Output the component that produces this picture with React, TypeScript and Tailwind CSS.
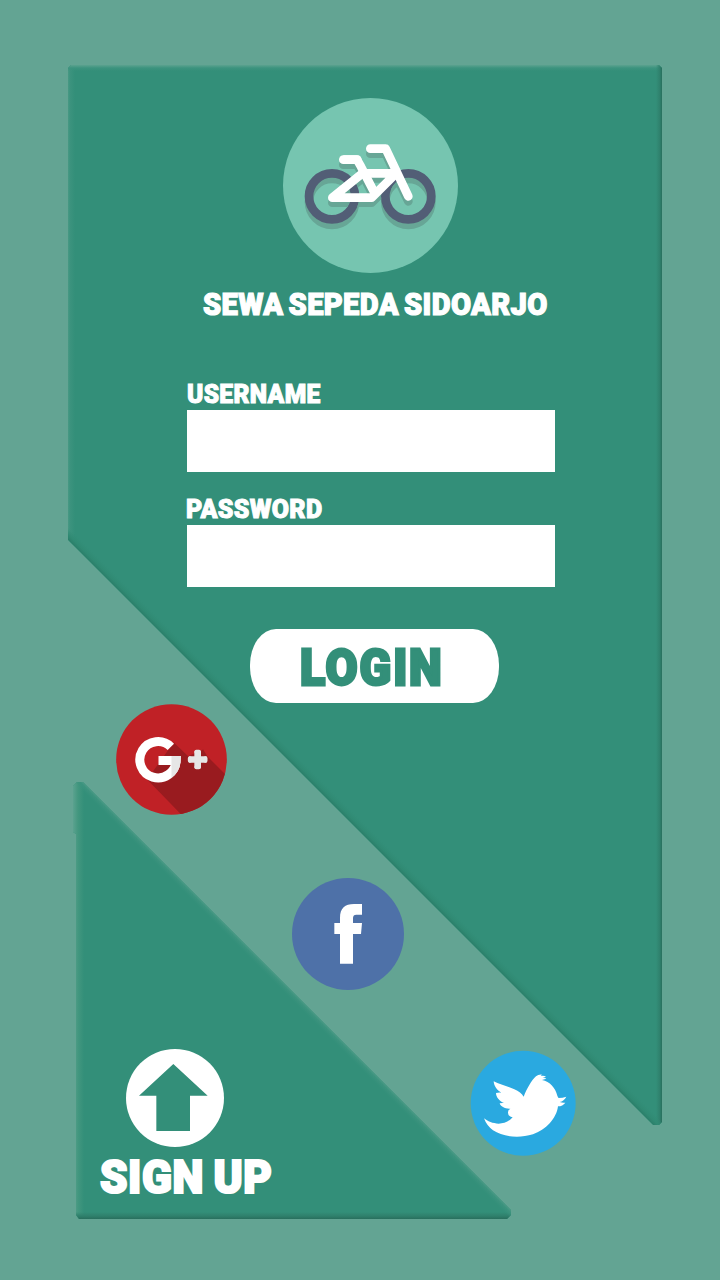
import React from "react";

function BikeLogo() {
  return (
    <svg className="block size-[175px]" viewBox="39 38 525 525" aria-hidden="true">
      <defs>
        <g id="frame" fill="none" strokeWidth="26" strokeLinecap="round" strokeLinejoin="round">
          <path d="M187 337 L277 264 H378 L305 337 Z" />
          <path d="M220 223 H261 L273 244 L315 325" strokeLinecap="butt" />
          <path d="M220 223 H262" />
          <path d="M301 190 H347 L415 333" />
        </g>
      </defs>
      <circle cx="301.5" cy="300.5" r="262.5" fill="#76c5b0" />
      <g fill="none" stroke="#67a696" strokeWidth="26">
        <circle cx="186" cy="350" r="69" />
        <circle cx="415" cy="350" r="69" />
      </g>
      <g fill="none" stroke="#525e76" strokeWidth="26">
        <circle cx="186" cy="333" r="69" />
        <circle cx="415" cy="333" r="69" />
      </g>
      <clipPath id="notWheels">
        <path clipRule="evenodd" d="M39 38H564V563H39Z M104 333a82 82 0 1 0 164 0a82 82 0 1 0 -164 0Z M333 333a82 82 0 1 0 164 0a82 82 0 1 0 -164 0Z" />
      </clipPath>
      <clipPath id="hubs">
        <circle cx="186" cy="333" r="56" />
        <circle cx="415" cy="333" r="56" />
      </clipPath>
      <g clipPath="url(#notWheels)"><use href="#frame" y="15" stroke="#67a696" /></g>
      <g clipPath="url(#hubs)"><use href="#frame" y="15" stroke="#67a696" /></g>
      <use href="#frame" stroke="#fff" />
    </svg>
  );
}

function GooglePlus() {
  return (
    <svg className="ml-[116px] mt-[704px] block size-[111px] shrink-0" viewBox="168.5 41.5 333 333" aria-hidden="true">
      <clipPath id="gDisc"><circle cx="335" cy="208" r="166" /></clipPath>
      <clipPath id="gRight"><path d="M335 190H380V300H335Z" /></clipPath>
      <circle cx="335" cy="208" r="166" fill="#c02126" />
      <path clipPath="url(#gDisc)" fill="#991b1f" d="M335 166 L342 157 L385 198 L430 178 L443 199 L540 296 L400 410 L262 268 Z" />
      <g fill="none" strokeWidth="27">
        <path stroke="#fff" d="M333 170 A54.500 54.500 0 1 0 349 211 H296" />
        <path clipPath="url(#gRight)" stroke="#e6e6e6" d="M333 170 A54.500 54.500 0 1 0 349 211 H296" />
      </g>
      <path stroke="#e6e6e6" strokeWidth="20" d="M388 208H440M413.500 183V233" />
      <path stroke="#e6e6e6" strokeWidth="12" strokeLinecap="round" d="M390 204V212M437 204V212M409.500 185H417.500M409.500 231H417.500" />
    </svg>
  );
}

function Facebook() {
  return (
    <svg className="ml-[292px] mt-[63px] block size-[112px] shrink-0" viewBox="36 39 336 336" aria-hidden="true">
      <circle cx="204" cy="207" r="168" fill="#4e71a8" />
      <path fill="#fff" d="M180 296V207H163V174H180V158C180 130 195 117 222 117H246V149H229Q219 149 219 159V174H246L243 207H219V296Z" />
    </svg>
  );
}

function Twitter() {
  return (
    <svg className="ml-[470px] mt-[60px] block size-[106px] shrink-0" viewBox="30 31 318 318" aria-hidden="true">
      <circle cx="189.500" cy="191" r="157.500" fill="#2aa9e0" />
      <path
        fill="#fff"
        d="M101 125 C119 134 145 141 163 149 C176 155 186 162 191 171 C200 149 214 122 228 110 Q235 104 246 105 L242 109 Q251 106 258 111 L248 115 Q257 114 259 117 L246 121 C270 126 286 144 292 168 Q294 174 296 175 Q308 175 319 171 Q312 184 299 187 Q307 190 316 189 Q308 200 294 200 C290 236 257 271 219 284 C174 298 128 291 99 272 Q80 258 72 236 C91 252 131 263 158 233 Q143 230 144 218 Q144 210 151 207 C135 208 122 201 119 191 Q126 189 132 190 C118 184 108 172 108 160 Q116 158 124 159 C111 152 102 139 101 125 Z"
      />
    </svg>
  );
}

function Field({ label, type }: { label: string; type: string }) {
  return (
    <label className="block h-[115px] w-[368px]">
      <span className="flex h-[25px] items-center whitespace-nowrap text-[26px] font-black leading-none text-white [-webkit-text-stroke:1px_#fff]">
        <span className={type === "password" ? "-ml-px inline-block origin-left scale-x-[0.96] tracking-[0.350px]" : "inline-block origin-left scale-x-[0.945] tracking-[0.350px]"}>{label}</span>
      </span>
      <input type={type} aria-label={label} className="mt-[3px] block h-[62px] w-full bg-white px-4 text-2xl text-gray-800 outline-none" />
    </label>
  );
}

export default function App() {
  return (
    <main className="grid h-[1280px] w-[720px] grid-cols-1 grid-rows-1 overflow-hidden bg-[#63a493] font-['Roboto',sans-serif]">
      <section className="col-start-1 row-start-1 ml-[67px] mt-[65px] flex h-[1060px] w-[595px] flex-col bg-[#338f79] bg-[linear-gradient(45deg,transparent_414px,#2c806b_415px,#308a73_418px,transparent_423px),linear-gradient(to_left,#286f5d,#2f806c_2px,transparent_6px),linear-gradient(to_bottom,#5ba28f,#3c937e_3px,transparent_6px),linear-gradient(to_right,#4f9c87,#3c937e_3px,transparent_8px)] [clip-path:polygon(4px_0,592px_0,595px_3px,595px_1057px,592px_1060px,586px_1060px,1px_475px,1px_3px)]">
        <div className="ml-[216px] mt-[32.500px]">
          <BikeLogo />
        </div>
        <h1 className="ml-[136px] mt-[17px] flex h-8 items-center whitespace-nowrap text-[30.500px] font-black leading-none text-white [-webkit-text-stroke:1.2px_#fff]">
          <span className="inline-block origin-left scale-x-[0.955] tracking-[0.350px] [word-spacing:-2.500px]">SEWA SEPEDA SIDOARJO</span>
        </h1>
        <form className="ml-[119.500px] mt-[60px] flex flex-col" onSubmit={(e) => e.preventDefault()}>
          <Field label="USERNAME" type="text" />
          <Field label="PASSWORD" type="password" />
          <button className="ml-[63.500px] mt-[17.500px] flex h-[73.500px] w-[249px] items-center rounded-[26px/36px] bg-white pl-[49.500px] pt-[4px] text-[50px] font-black leading-none text-[#338f79] [-webkit-text-stroke:2.800px_#338f79]">
            <span className="inline-block origin-left scale-x-[0.93] tracking-[2px]">LOGIN</span>
          </button>
        </form>
      </section>

      <section className="col-start-1 row-start-1 ml-[73px] mt-[782px] flex h-[437px] w-[438px] flex-col bg-[#338f79] bg-[linear-gradient(45deg,transparent_310px,#3c937e_314px,#4b9a85_316px,transparent_317px),linear-gradient(to_top,#286f5d,#2f806c_3px,transparent_7px),linear-gradient(to_right,#5ba28f,#43977f_5px,transparent_11px)] [clip-path:polygon(4px_0,10px_0,438px_428px,438px_433px,434px_437px,6px_437px,3px_433px,3px_52px,0_50px,0_4px)]">
        <button className="flex flex-col pt-[267px] text-left">
          <svg className="ml-[53px] block size-[98px]" viewBox="198 27 294 294" aria-hidden="true">
            <circle cx="345" cy="174" r="147" fill="#fff" />
            <path fill="#338f79" d="M340 72L443 167H390V273H289V167H237Z" />
          </svg>
          <span className="ml-[27px] mt-[5px] flex h-[50px] items-center whitespace-nowrap text-[46px] font-black leading-none text-white [-webkit-text-stroke:2.200px_#fff]">
            <span className="inline-block origin-left scale-x-[0.955] tracking-[0.600px] [word-spacing:-2px]">SIGN UP</span>
          </span>
        </button>
      </section>

      <nav className="pointer-events-none col-start-1 row-start-1 flex flex-col">
        <GooglePlus />
        <Facebook />
        <Twitter />
      </nav>
    </main>
  );
}
